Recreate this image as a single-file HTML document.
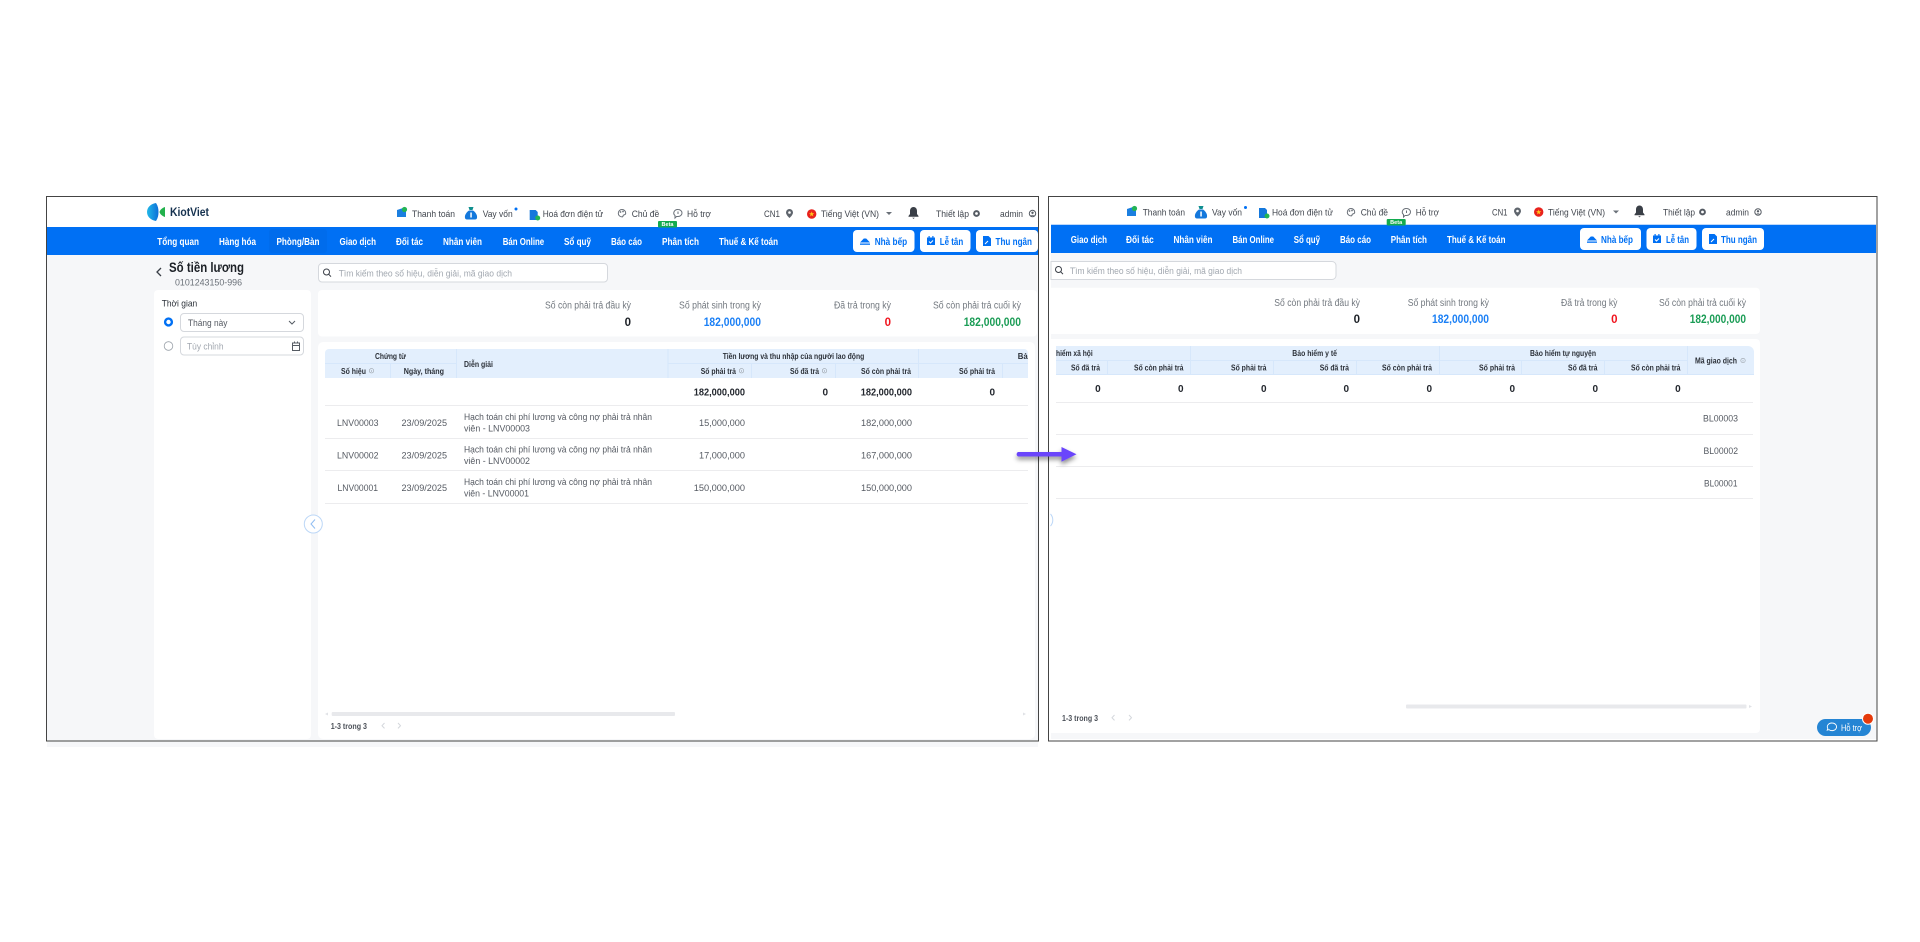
<!DOCTYPE html>
<html lang="vi"><head><meta charset="utf-8"><title>Sổ tiền lương</title>
<style>
html,body{margin:0;padding:0;background:#fff;width:1920px;height:942px;overflow:hidden}
svg{display:block;font-family:"Liberation Sans",sans-serif}
text{white-space:pre}
.tb{font-size:9.5px;fill:#41464e}
.nav{font-size:10.5px;font-weight:700;fill:#fff}
.btn{font-size:10.5px;font-weight:700;fill:#0070f4}
.h{font-size:8.5px;font-weight:700;fill:#2b3038}
.c{font-size:9.5px;fill:#555a62}
.b{font-size:10px;font-weight:700;fill:#23272e}
.l{font-size:10px;fill:#72787f}
.v{font-size:11.5px;font-weight:700}
.ph{font-size:9.5px;fill:#a2a8b0}
</style></head><body>
<svg width="1920" height="942" viewBox="0 0 1920 942" xmlns="http://www.w3.org/2000/svg">
<defs>
<linearGradient id="lg" x1="0" y1="0" x2="1" y2="0"><stop offset="0" stop-color="#22b8e8"/><stop offset="1" stop-color="#0c6fd8"/></linearGradient>
<clipPath id="cl"><rect x="325" y="349" width="703" height="160"/></clipPath>
<g id="ipay"><path d="M0 3l6-2v2h3v7H0z" fill="#1b7fe0"/><circle cx="7.5" cy="2.5" r="2.6" fill="#22b455"/></g>
<g id="ibag"><path d="M3.5 0h5l-1 3h-3z" fill="#0f8f8f"/><path d="M4 3.5h4c3 2 4.5 5 4 7.5-.2 1-1 1.5-2 1.5H2c-1 0-1.8-.5-2-1.5C-.5 8.5 1 5.500 4 3.500z" fill="#1478dc"/><rect x="5.300" y="5.500" width="1.500" height="5" fill="#fff"/></g>
<g id="iinv"><path d="M0 0h6l2 2v8H0z" fill="#1478dc"/><circle cx="8" cy="8" r="2.500" fill="#22b455"/></g>
<g id="ipal" fill="none" stroke="#6a7078" stroke-width="1"><path d="M4 .5a3.700 3.700 0 1 0 0 7.400c1.300 0 1-1.200 1.300-1.700.4-.6 2.400-.1 2.400-2C7.700 2 6 .5 4 .5z"/><circle cx="2.500" cy="3" r=".4"/><circle cx="5" cy="2.500" r=".4"/></g>
<g id="isup" fill="none" stroke="#6a7078" stroke-width="1"><path d="M4.500.5a4 3.500 0 0 1 0 7H3L1.500 9V6.500A4 3.500 0 0 1 4.500.5z"/><path d="M4.500 2.500v2.500"/></g>
<g id="ipin"><path d="M3.500 0A3.500 3.500 0 0 0 0 3.500C0 6 3.500 9 3.500 9S7 6 7 3.500A3.500 3.500 0 0 0 3.500 0z" fill="#5f656d"/><circle cx="3.500" cy="3.500" r="1.300" fill="#fff"/></g>
<g id="ibell"><path d="M5.500 0C3.500 0 2 1.500 2 4v3L.5 9v.8h10V9L9 7V4c0-2.500-1.500-4-3.500-4z" fill="#3a3f47"/><path d="M4.200 10.700h2.600l-1.300 1.200z" fill="#3a3f47"/></g>
<g id="igear"><circle cx="3.500" cy="3.500" r="2.400" fill="none" stroke="#555b63" stroke-width="2"/></g>
<g id="iuser"><circle cx="3.500" cy="3.500" r="3.200" fill="none" stroke="#555b63" stroke-width="1"/><circle cx="3.500" cy="2.800" r="1.200" fill="#555b63"/><path d="M1.500 5.800c.8-1.300 3.200-1.300 4 0z" fill="#555b63"/></g>
<g id="ihat" fill="#0070f4"><path d="M0 6.500L3.800 2.500h2.400L10 6.500z"/><rect y="7.500" width="10" height="1.300"/></g>
<g id="ical" fill="#0070f4"><path d="M0 1.500h8V9H0z"/><rect x="1.500" width="1.200" height="2"/><rect x="5.300" width="1.200" height="2"/><path d="M2 5.500l1.500 1.500L6 4.500" fill="none" stroke="#fff" stroke-width="1"/></g>
<g id="idoc" fill="#0070f4"><path d="M0 0h5.500L8 2.500V10H0z"/><path d="M2 8l3-3" stroke="#fff" stroke-width="1"/></g>
<g id="iinfo"><circle cx="2.500" cy="2.500" r="2.200" fill="none" stroke="#9aa1a9" stroke-width=".6"/><rect x="2.200" y="1.800" width=".6" height="1.800" fill="#9aa1a9"/></g>
<g id="iflag"><circle r="4.700" fill="#e8211c"/><path d="M0-2.600l.7 1.900h2l-1.600 1.200.6 2L0 1.300l-1.700 1.200.6-2-1.600-1.200h2z" fill="#ffc61a"/></g>
<g id="ibeta"><rect width="19" height="6.500" rx="1" fill="#13ab4f"/></g>
<filter id="sh" x="-20%" y="-100%" width="140%" height="300%"><feDropShadow dx="0" dy="3" stdDeviation="2.500" flood-color="#000" flood-opacity=".45"/></filter>
</defs>

<!-- LEFT SCREEN -->
<rect x="47" y="741" width="991" height="6" fill="#f6f7f9"/>
<rect x="47" y="197" width="991" height="544" fill="#fff"/>
<rect x="47" y="255" width="991" height="486" fill="#f6f7f9"/>
<rect x="47" y="227" width="991" height="28" fill="#0070f4"/>
<path d="M156 203c-6 1-9 5-9 9s3 8 9 9c2-3 2.500-6 2.500-9s-.5-6-2.500-9z" fill="url(#lg)"/><path d="M165 207v10c-3-1-5-3-5.500-5 .5-2 2.500-4 5.500-5z" fill="#22b14c"/>
<text x="170" y="216" textLength="39" lengthAdjust="spacingAndGlyphs" font-size="11.500" font-weight="700" fill="#16324f">KiotViet</text>
<use href="#ipay" x="397" y="207"/><text class="tb" x="412" y="217" textLength="43" lengthAdjust="spacingAndGlyphs">Thanh toán</text>
<use href="#ibag" x="465" y="207"/><text class="tb" x="482.700" y="217" textLength="30" lengthAdjust="spacingAndGlyphs">Vay vốn</text><circle cx="516" cy="209" r="1.500" fill="#0070f4"/>
<use href="#iinv" x="529.700" y="210"/><text class="tb" x="542.700" y="217" textLength="60.500" lengthAdjust="spacingAndGlyphs">Hoá đơn điện tử</text>
<use href="#ipal" x="618" y="209"/><text class="tb" x="631.700" y="217" textLength="27.500" lengthAdjust="spacingAndGlyphs">Chủ đề</text>
<use href="#isup" x="673.500" y="209"/><text class="tb" x="687" y="217" textLength="24" lengthAdjust="spacingAndGlyphs">Hỗ trợ</text>
<use href="#ibeta" x="658" y="221"/><text x="661.500" y="226" font-size="5.500" font-weight="700" fill="#fff" textLength="12" lengthAdjust="spacingAndGlyphs">Beta</text>
<text class="tb" x="764" y="217" textLength="16" lengthAdjust="spacingAndGlyphs">CN1</text><use href="#ipin" x="786" y="209"/>
<use href="#iflag" x="811.700" y="214"/><text class="tb" x="821" y="217" textLength="58" lengthAdjust="spacingAndGlyphs">Tiếng Việt (VN)</text><path d="M886 212h6l-3 3z" fill="#6a7078"/>
<use href="#ibell" x="908" y="207"/>
<text class="tb" x="936" y="217" textLength="33" lengthAdjust="spacingAndGlyphs">Thiết lập</text><use href="#igear" x="973" y="210"/>
<text class="tb" x="1000" y="217" textLength="23" lengthAdjust="spacingAndGlyphs">admin</text><use href="#iuser" x="1029" y="210"/>

<rect x="269" y="229" width="58" height="24" rx="3" fill="#006cec"/>
<g class="nav">
<text x="157.300" y="245" textLength="41.700" lengthAdjust="spacingAndGlyphs">Tổng quan</text>
<text x="219" y="245" textLength="37" lengthAdjust="spacingAndGlyphs">Hàng hóa</text>
<text x="276.500" y="245" textLength="43" lengthAdjust="spacingAndGlyphs">Phòng/Bàn</text>
<text x="339.500" y="245" textLength="36.500" lengthAdjust="spacingAndGlyphs">Giao dịch</text>
<text x="396" y="245" textLength="27" lengthAdjust="spacingAndGlyphs">Đối tác</text>
<text x="443" y="245" textLength="39" lengthAdjust="spacingAndGlyphs">Nhân viên</text>
<text x="502.700" y="245" textLength="41.500" lengthAdjust="spacingAndGlyphs">Bán Online</text>
<text x="564" y="245" textLength="27" lengthAdjust="spacingAndGlyphs">Sổ quỹ</text>
<text x="611" y="245" textLength="31" lengthAdjust="spacingAndGlyphs">Báo cáo</text>
<text x="662" y="245" textLength="37" lengthAdjust="spacingAndGlyphs">Phân tích</text>
<text x="719" y="245" textLength="59" lengthAdjust="spacingAndGlyphs">Thuế &amp; Kế toán</text>
</g>
<rect x="853" y="230" width="61.500" height="22" rx="4" fill="#fff"/><use href="#ihat" x="860" y="236"/><text class="btn" x="874.700" y="245" textLength="32.500" lengthAdjust="spacingAndGlyphs">Nhà bếp</text>
<rect x="920" y="230" width="50.500" height="22" rx="4" fill="#fff"/><use href="#ical" x="927" y="236"/><text class="btn" x="939.700" y="245" textLength="23.500" lengthAdjust="spacingAndGlyphs">Lễ tân</text>
<rect x="976" y="230" width="62" height="22" rx="4" fill="#fff"/><use href="#idoc" x="983" y="236"/><text class="btn" x="995.500" y="245" textLength="36.500" lengthAdjust="spacingAndGlyphs">Thu ngân</text>

<path d="M161 268l-4 4 4 4" fill="none" stroke="#3a3f47" stroke-width="1.300"/>
<text x="169" y="272" textLength="75" lengthAdjust="spacingAndGlyphs" font-size="13.500" font-weight="700" fill="#1c2026">Số tiền lương</text>
<text x="175" y="285.500" textLength="67" lengthAdjust="spacingAndGlyphs" font-size="9.500" fill="#6a7078">0101243150-996</text>
<rect x="154" y="290" width="157" height="449" rx="4" fill="#fff"/>
<text x="161.700" y="306.500" textLength="35.500" lengthAdjust="spacingAndGlyphs" font-size="9.500" fill="#2b3038">Thời gian</text>
<circle cx="168.500" cy="322" r="3.400" fill="#fff" stroke="#0070f4" stroke-width="2.400"/>
<rect x="180.500" y="313.500" width="123" height="18" rx="3.500" fill="#fff" stroke="#d5d8dd"/>
<text class="c" x="188" y="326" textLength="39.500" lengthAdjust="spacingAndGlyphs">Tháng này</text>
<path d="M289 321l3 3 3-3" fill="none" stroke="#555b63"/>
<circle cx="168.500" cy="346" r="4.300" fill="#fff" stroke="#9aa1a9" stroke-width=".8"/>
<rect x="180.500" y="337" width="123" height="18" rx="3.500" fill="#fff" stroke="#d5d8dd"/>
<text class="ph" x="187" y="349.500" textLength="36.500" lengthAdjust="spacingAndGlyphs">Tùy chỉnh</text>
<g fill="none" stroke="#555b63"><rect x="292.500" y="343" width="7" height="7.500"/><path d="M292.500 345.500h7M294.500 341.500v2M297.500 341.500v2"/></g>

<rect x="318.500" y="263.500" width="289" height="18.500" rx="3.500" fill="#fff" stroke="#d5d8dd"/>
<circle cx="326.500" cy="272" r="3" fill="none" stroke="#3a3f47"/><path d="M328.700 274.300l2.300 2.300" stroke="#3a3f47"/>
<text class="ph" x="338.700" y="276.500" textLength="173.300" lengthAdjust="spacingAndGlyphs">Tìm kiếm theo số hiệu, diễn giải, mã giao dịch</text>

<rect x="318" y="290" width="719" height="46.500" rx="4" fill="#fff"/>
<text class="l" x="545" y="308.500" textLength="86" lengthAdjust="spacingAndGlyphs">Số còn phải trả đầu kỳ</text>
<text class="l" x="679" y="308.500" textLength="82" lengthAdjust="spacingAndGlyphs">Số phát sinh trong kỳ</text>
<text class="l" x="834" y="308.500" textLength="57" lengthAdjust="spacingAndGlyphs">Đã trả trong kỳ</text>
<text class="l" x="933" y="308.500" textLength="88" lengthAdjust="spacingAndGlyphs">Số còn phải trả cuối kỳ</text>
<text class="v" x="631" y="326" text-anchor="end" fill="#1c2026">0</text>
<text class="v" x="703.700" y="326" textLength="57.300" lengthAdjust="spacingAndGlyphs" fill="#1a7ff5">182,000,000</text>
<text class="v" x="891" y="326" text-anchor="end" fill="#f0141e">0</text>
<text class="v" x="963.700" y="326" textLength="57.300" lengthAdjust="spacingAndGlyphs" fill="#1a9c55">182,000,000</text>

<rect x="318" y="342" width="717" height="397" rx="5" fill="#fff"/>
<path d="M329 349h695a4 4 0 0 1 4 4v25H325v-25a4 4 0 0 1 4-4z" fill="#e3effd"/>
<g stroke="#d6e7fb" stroke-width="1" fill="none">
<path d="M325 363.500h131M668 363.500h360M456.500 349v29M668 349v29M390.500 363.500v14.500M751.500 363.500v14.500M835.500 363.500v14.500M918.500 349v29M1002.500 363.500v14.500"/>
</g>
<g stroke="#ececee" stroke-width="1" fill="none"><path d="M325 405.500h703M325 438.500h703M325 470.500h703M325 503.500h703"/></g>
<text class="h" x="375" y="359" textLength="31" lengthAdjust="spacingAndGlyphs">Chứng từ</text>
<text class="h" x="341" y="374" textLength="25" lengthAdjust="spacingAndGlyphs">Số hiệu</text><use href="#iinfo" x="369" y="368.300"/>
<text class="h" x="403.700" y="374" textLength="40.300" lengthAdjust="spacingAndGlyphs">Ngày, tháng</text>
<text class="h" x="464" y="367" textLength="29" lengthAdjust="spacingAndGlyphs">Diễn giải</text>
<text class="h" x="722.700" y="359" textLength="141.600" lengthAdjust="spacingAndGlyphs">Tiền lương và thu nhập của người lao động</text>
<text class="h" x="700.700" y="374" textLength="35.300" lengthAdjust="spacingAndGlyphs">Số phải trả</text><use href="#iinfo" x="739" y="368.300"/>
<text class="h" x="790" y="374" textLength="29" lengthAdjust="spacingAndGlyphs">Số đã trả</text><use href="#iinfo" x="822" y="368.300"/>
<text class="h" x="861" y="374" textLength="50" lengthAdjust="spacingAndGlyphs">Số còn phải trả</text>
<text class="h" x="959" y="374" textLength="36" lengthAdjust="spacingAndGlyphs">Số phải trả</text>
<g clip-path="url(#cl)"><text class="h" x="1017.700" y="359" textLength="60" lengthAdjust="spacingAndGlyphs">Bảo hiểm xã hội</text></g>

<text class="b" x="693.700" y="395.500" textLength="51.300" lengthAdjust="spacingAndGlyphs">182,000,000</text>
<text class="b" x="828" y="395.500" text-anchor="end">0</text>
<text class="b" x="860.700" y="395.500" textLength="51.300" lengthAdjust="spacingAndGlyphs">182,000,000</text>
<text class="b" x="995" y="395.500" text-anchor="end">0</text>

<text class="c" x="337" y="426" textLength="41.500" lengthAdjust="spacingAndGlyphs">LNV00003</text>
<text class="c" x="401.500" y="426" textLength="45.500" lengthAdjust="spacingAndGlyphs">23/09/2025</text>
<text class="c" x="464" y="420" textLength="188" lengthAdjust="spacingAndGlyphs">Hạch toán chi phí lương và công nợ phải trả nhân</text>
<text class="c" x="464" y="431.500" textLength="66" lengthAdjust="spacingAndGlyphs">viên - LNV00003</text>
<text class="c" x="699" y="426" textLength="46" lengthAdjust="spacingAndGlyphs">15,000,000</text>
<text class="c" x="861" y="426" textLength="51" lengthAdjust="spacingAndGlyphs">182,000,000</text>

<text class="c" x="337" y="458.500" textLength="41.500" lengthAdjust="spacingAndGlyphs">LNV00002</text>
<text class="c" x="401.500" y="458.500" textLength="45.500" lengthAdjust="spacingAndGlyphs">23/09/2025</text>
<text class="c" x="464" y="452.500" textLength="188" lengthAdjust="spacingAndGlyphs">Hạch toán chi phí lương và công nợ phải trả nhân</text>
<text class="c" x="464" y="464" textLength="66" lengthAdjust="spacingAndGlyphs">viên - LNV00002</text>
<text class="c" x="699" y="458.500" textLength="46" lengthAdjust="spacingAndGlyphs">17,000,000</text>
<text class="c" x="861" y="458.500" textLength="51" lengthAdjust="spacingAndGlyphs">167,000,000</text>

<text class="c" x="337.500" y="490.800" textLength="40.500" lengthAdjust="spacingAndGlyphs">LNV00001</text>
<text class="c" x="401.500" y="490.800" textLength="45.500" lengthAdjust="spacingAndGlyphs">23/09/2025</text>
<text class="c" x="464" y="485" textLength="188" lengthAdjust="spacingAndGlyphs">Hạch toán chi phí lương và công nợ phải trả nhân</text>
<text class="c" x="464" y="496.500" textLength="65" lengthAdjust="spacingAndGlyphs">viên - LNV00001</text>
<text class="c" x="693.700" y="490.800" textLength="51.300" lengthAdjust="spacingAndGlyphs">150,000,000</text>
<text class="c" x="861" y="490.800" textLength="51" lengthAdjust="spacingAndGlyphs">150,000,000</text>

<circle cx="313.300" cy="524" r="9" fill="#fff" stroke="#bcd7f7"/><path d="M315 519.500l-4 4.500 4 4.500" fill="none" stroke="#8fbdf2"/>
<rect x="331.700" y="712" width="343.300" height="4" rx="1" fill="#e8e9ec"/><path d="M328 712.500l-3 1.500 3 1.500z" fill="#e0e2e6"/><path d="M1023 712.500l3 1.500-3 1.500z" fill="#e0e2e6"/>
<text x="330.700" y="729" textLength="36.300" lengthAdjust="spacingAndGlyphs" font-size="8.500" font-weight="700" fill="#4a4f57">1-3 trong 3</text>
<path d="M384.500 723l-2.500 2.700 2.500 2.700M398 723l2.500 2.700-2.500 2.700" fill="none" stroke="#d4d7dc"/>

<!-- RIGHT SCREEN -->
<rect x="1049" y="197" width="828" height="544" fill="#fff"/>
<rect x="1051" y="253" width="826" height="486" fill="#f6f7f9"/>
<rect x="1051" y="224" width="825" height="1" fill="#bcd8fb"/>
<rect x="1051" y="225" width="825" height="28" fill="#0070f4"/>
<use href="#ipay" x="1127" y="206"/><text class="tb" x="1142.700" y="215.500" textLength="42.300" lengthAdjust="spacingAndGlyphs">Thanh toán</text>
<use href="#ibag" x="1195" y="206"/><text class="tb" x="1212" y="215.500" textLength="30" lengthAdjust="spacingAndGlyphs">Vay vốn</text><circle cx="1245.500" cy="207.500" r="1.500" fill="#0070f4"/>
<use href="#iinv" x="1259" y="208"/><text class="tb" x="1272" y="215.500" textLength="61" lengthAdjust="spacingAndGlyphs">Hoá đơn điện tử</text>
<use href="#ipal" x="1347" y="208"/><text class="tb" x="1360.700" y="215.500" textLength="27.300" lengthAdjust="spacingAndGlyphs">Chủ đề</text>
<use href="#isup" x="1402" y="208"/><text class="tb" x="1415.700" y="215.500" textLength="23.300" lengthAdjust="spacingAndGlyphs">Hỗ trợ</text>
<use href="#ibeta" x="1386.700" y="219"/><text x="1390.200" y="224" font-size="5.500" font-weight="700" fill="#fff" textLength="12" lengthAdjust="spacingAndGlyphs">Beta</text>
<text class="tb" x="1492" y="215.500" textLength="15.500" lengthAdjust="spacingAndGlyphs">CN1</text><use href="#ipin" x="1514" y="207.500"/>
<use href="#iflag" x="1538.700" y="212"/><text class="tb" x="1548" y="215.500" textLength="57" lengthAdjust="spacingAndGlyphs">Tiếng Việt (VN)</text><path d="M1613 210.500h6l-3 3z" fill="#6a7078"/>
<use href="#ibell" x="1634" y="205.500"/>
<text class="tb" x="1663" y="215.500" textLength="32" lengthAdjust="spacingAndGlyphs">Thiết lập</text><use href="#igear" x="1699" y="208.500"/>
<text class="tb" x="1726" y="215.500" textLength="23" lengthAdjust="spacingAndGlyphs">admin</text><use href="#iuser" x="1754.500" y="208.500"/>
<g class="nav">
<text x="1070.700" y="243" textLength="36.300" lengthAdjust="spacingAndGlyphs">Giao dịch</text>
<text x="1126" y="243" textLength="27.700" lengthAdjust="spacingAndGlyphs">Đối tác</text>
<text x="1173.500" y="243" textLength="39" lengthAdjust="spacingAndGlyphs">Nhân viên</text>
<text x="1232.500" y="243" textLength="41.500" lengthAdjust="spacingAndGlyphs">Bán Online</text>
<text x="1293.700" y="243" textLength="26.300" lengthAdjust="spacingAndGlyphs">Sổ quỹ</text>
<text x="1340" y="243" textLength="31" lengthAdjust="spacingAndGlyphs">Báo cáo</text>
<text x="1390.700" y="243" textLength="36.300" lengthAdjust="spacingAndGlyphs">Phân tích</text>
<text x="1447" y="243" textLength="58.500" lengthAdjust="spacingAndGlyphs">Thuế &amp; Kế toán</text>
</g>
<rect x="1580" y="228" width="61" height="22" rx="4" fill="#fff"/><use href="#ihat" x="1587" y="234"/><text class="btn" x="1601" y="243" textLength="32" lengthAdjust="spacingAndGlyphs">Nhà bếp</text>
<rect x="1646.500" y="228" width="50" height="22" rx="4" fill="#fff"/><use href="#ical" x="1653" y="234"/><text class="btn" x="1666" y="243" textLength="23" lengthAdjust="spacingAndGlyphs">Lễ tân</text>
<rect x="1702" y="228" width="62" height="22" rx="4" fill="#fff"/><use href="#idoc" x="1709" y="234"/><text class="btn" x="1721" y="243" textLength="36" lengthAdjust="spacingAndGlyphs">Thu ngân</text>

<path d="M1051 261.500h281a4 4 0 0 1 4 4v10a4 4 0 0 1-4 4h-281z" fill="#fff" stroke="#d5d8dd"/>
<circle cx="1058.500" cy="269.500" r="3" fill="none" stroke="#3a3f47"/><path d="M1060.700 271.800l2.300 2.300" stroke="#3a3f47"/>
<text class="ph" x="1070" y="274" textLength="172" lengthAdjust="spacingAndGlyphs">Tìm kiếm theo số hiệu, diễn giải, mã giao dịch</text>

<path d="M1051 287.700h705a4 4 0 0 1 4 4v38.300a4 4 0 0 1-4 4h-705z" fill="#fff"/>
<text class="l" x="1274.300" y="306" textLength="85.700" lengthAdjust="spacingAndGlyphs">Số còn phải trả đầu kỳ</text>
<text class="l" x="1407.700" y="306" textLength="81.300" lengthAdjust="spacingAndGlyphs">Số phát sinh trong kỳ</text>
<text class="l" x="1561" y="306" textLength="56.500" lengthAdjust="spacingAndGlyphs">Đã trả trong kỳ</text>
<text class="l" x="1659" y="306" textLength="87" lengthAdjust="spacingAndGlyphs">Số còn phải trả cuối kỳ</text>
<text class="v" x="1360" y="323" text-anchor="end" fill="#1c2026">0</text>
<text class="v" x="1432" y="323" textLength="57" lengthAdjust="spacingAndGlyphs" fill="#1a7ff5">182,000,000</text>
<text class="v" x="1617.500" y="323" text-anchor="end" fill="#f0141e">0</text>
<text class="v" x="1689.700" y="323" textLength="56.300" lengthAdjust="spacingAndGlyphs" fill="#1a9c55">182,000,000</text>

<path d="M1051 339h705a4 4 0 0 1 4 4v386a4 4 0 0 1-4 4h-705z" fill="#fff"/>
<path d="M1056 346h692a6 6 0 0 1 6 6v23h-698z" fill="#e3effd"/>
<g stroke="#d6e7fb" stroke-width="1" fill="none">
<path d="M1056 360.500h631.500M1056 374.500h698M1107.500 360.500v14M1190.500 346v29M1273.500 360.500v14M1356.500 360.500v14M1439.500 346v29M1521.500 360.500v14M1604.500 360.500v14M1687.500 346v29"/>
</g>
<g stroke="#ececee" stroke-width="1" fill="none"><path d="M1056 402.500h697M1056 434.500h697M1056 466.500h697M1056 498.500h697"/></g>
<text class="h" x="1056" y="356" textLength="36.700" lengthAdjust="spacingAndGlyphs">hiểm xã hội</text>
<text class="h" x="1292.300" y="356" textLength="44.700" lengthAdjust="spacingAndGlyphs">Bảo hiểm y tế</text>
<text class="h" x="1530" y="356" textLength="66" lengthAdjust="spacingAndGlyphs">Bảo hiểm tự nguyện</text>
<text class="h" x="1071" y="370.500" textLength="29" lengthAdjust="spacingAndGlyphs">Số đã trả</text>
<text class="h" x="1134" y="370.500" textLength="49.500" lengthAdjust="spacingAndGlyphs">Số còn phải trả</text>
<text class="h" x="1231" y="370.500" textLength="35.500" lengthAdjust="spacingAndGlyphs">Số phải trả</text>
<text class="h" x="1319.700" y="370.500" textLength="29.300" lengthAdjust="spacingAndGlyphs">Số đã trả</text>
<text class="h" x="1382" y="370.500" textLength="50" lengthAdjust="spacingAndGlyphs">Số còn phải trả</text>
<text class="h" x="1479" y="370.500" textLength="36" lengthAdjust="spacingAndGlyphs">Số phải trả</text>
<text class="h" x="1568" y="370.500" textLength="29.500" lengthAdjust="spacingAndGlyphs">Số đã trả</text>
<text class="h" x="1631" y="370.500" textLength="49.500" lengthAdjust="spacingAndGlyphs">Số còn phải trả</text>
<text class="h" x="1695" y="363.500" textLength="42" lengthAdjust="spacingAndGlyphs">Mã giao dịch</text><use href="#iinfo" x="1740.500" y="358"/>
<g class="b">
<text x="1100.700" y="392" text-anchor="end">0</text><text x="1183.500" y="392" text-anchor="end">0</text><text x="1266.500" y="392" text-anchor="end">0</text><text x="1349" y="392" text-anchor="end">0</text><text x="1432" y="392" text-anchor="end">0</text><text x="1515" y="392" text-anchor="end">0</text><text x="1598" y="392" text-anchor="end">0</text><text x="1680.700" y="392" text-anchor="end">0</text>
</g>
<text class="c" x="1703" y="421.700" textLength="35" lengthAdjust="spacingAndGlyphs">BL00003</text>
<text class="c" x="1703.500" y="454" textLength="34.500" lengthAdjust="spacingAndGlyphs">BL00002</text>
<text class="c" x="1704" y="486.300" textLength="33.500" lengthAdjust="spacingAndGlyphs">BL00001</text>
<path d="M1050.500 514a9 9 0 0 1 0 12" fill="none" stroke="#bcd7f7"/>
<rect x="1406" y="704.500" width="340.500" height="4" rx="1" fill="#e8e9ec"/><path d="M1749 705l3 1.500-3 1.500z" fill="#e0e2e6"/>
<text x="1062" y="721" textLength="36" lengthAdjust="spacingAndGlyphs" font-size="8.500" font-weight="700" fill="#4a4f57">1-3 trong 3</text>
<path d="M1114.500 715l-2.500 2.700 2.500 2.700M1129 715l2.500 2.700-2.500 2.700" fill="none" stroke="#d4d7dc"/>

<rect x="1817" y="719" width="54" height="17" rx="8.500" fill="#2585d4"/>
<path d="M1832 723a4.500 3.800 0 1 1-3 6.600l-1.800.6.600-1.700a4.500 3.800 0 0 1 4.200-5.500z" fill="none" stroke="#fff" stroke-width=".9"/>
<text x="1841" y="731" textLength="21" lengthAdjust="spacingAndGlyphs" font-size="9" fill="#fff">Hỗ trợ</text>
<circle cx="1868" cy="718.700" r="5.500" fill="#e53a0b" stroke="#fff" stroke-width="1"/>

<!-- FRAMES -->
<rect x="46.500" y="196.500" width="992" height="544.500" fill="none" stroke="#444" stroke-width="1"/>
<rect x="1048.500" y="196.500" width="828.500" height="544.500" fill="none" stroke="#444" stroke-width="1"/>

<!-- ARROW -->
<g filter="url(#sh)"><path d="M1018 452h43.500v-5l15 7.300-15 7.500v-5.300H1018a2.500 2.500 0 0 1 0-4.500z" fill="#6a45fb"/></g>
</svg>
</body></html>
